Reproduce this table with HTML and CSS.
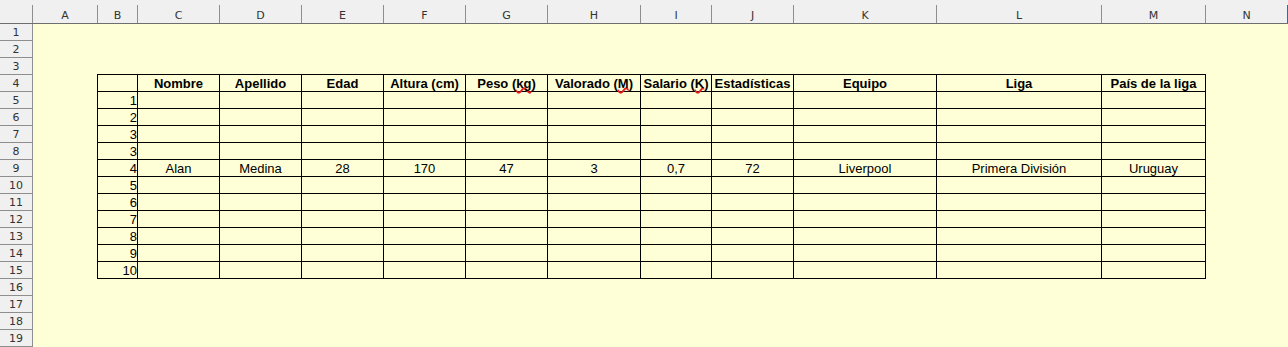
FILE: index.html
```html
<!DOCTYPE html>
<html lang="es">
<head>
<meta charset="utf-8">
<title>Jugadores</title>
<link rel="stylesheet" href="styles.css">
</head>
<body>
<div class="sheet">
  <div class="corner"><span></span></div>
  <div class="colhead"><span>A</span></div>
  <div class="colhead"><span>B</span></div>
  <div class="colhead"><span>C</span></div>
  <div class="colhead"><span>D</span></div>
  <div class="colhead"><span>E</span></div>
  <div class="colhead"><span>F</span></div>
  <div class="colhead"><span>G</span></div>
  <div class="colhead"><span>H</span></div>
  <div class="colhead"><span>I</span></div>
  <div class="colhead"><span>J</span></div>
  <div class="colhead"><span>K</span></div>
  <div class="colhead"><span>L</span></div>
  <div class="colhead"><span>M</span></div>
  <div class="colhead colhead-last"><span>N</span></div>

  <div class="rowhead">1</div>
  <div class="rowhead">2</div>
  <div class="rowhead">3</div>
  <div class="rowhead">4</div>
  <div class="rowhead">5</div>
  <div class="rowhead">6</div>
  <div class="rowhead">7</div>
  <div class="rowhead">8</div>
  <div class="rowhead">9</div>
  <div class="rowhead">10</div>
  <div class="rowhead">11</div>
  <div class="rowhead">12</div>
  <div class="rowhead">13</div>
  <div class="rowhead">14</div>
  <div class="rowhead">15</div>
  <div class="rowhead">16</div>
  <div class="rowhead">17</div>
  <div class="rowhead">18</div>
  <div class="rowhead">19</div>

  <div class="players">
    <div class="th"></div>
    <div class="th">Nombre</div>
    <div class="th">Apellido</div>
    <div class="th">Edad</div>
    <div class="th">Altura (cm)</div>
    <div class="th">Peso (<span class="typo">kg</span>)</div>
    <div class="th">Valorado (<span class="typo">M</span>)</div>
    <div class="th">Salario (<span class="typo">K</span>)</div>
    <div class="th">Estadísticas</div>
    <div class="th">Equipo</div>
    <div class="th">Liga</div>
    <div class="th">País de la liga</div>

    <div class="num">1</div><div></div><div></div><div></div><div></div><div></div><div></div><div></div><div></div><div></div><div></div><div></div>
    <div class="num">2</div><div></div><div></div><div></div><div></div><div></div><div></div><div></div><div></div><div></div><div></div><div></div>
    <div class="num">3</div><div></div><div></div><div></div><div></div><div></div><div></div><div></div><div></div><div></div><div></div><div></div>
    <div class="num">3</div><div></div><div></div><div></div><div></div><div></div><div></div><div></div><div></div><div></div><div></div><div></div>
    <div class="num">4</div><div>Alan</div><div>Medina</div><div>28</div><div>170</div><div>47</div><div>3</div><div>0,7</div><div>72</div><div>Liverpool</div><div>Primera División</div><div>Uruguay</div>
    <div class="num">5</div><div></div><div></div><div></div><div></div><div></div><div></div><div></div><div></div><div></div><div></div><div></div>
    <div class="num">6</div><div></div><div></div><div></div><div></div><div></div><div></div><div></div><div></div><div></div><div></div><div></div>
    <div class="num">7</div><div></div><div></div><div></div><div></div><div></div><div></div><div></div><div></div><div></div><div></div><div></div>
    <div class="num">8</div><div></div><div></div><div></div><div></div><div></div><div></div><div></div><div></div><div></div><div></div><div></div>
    <div class="num">9</div><div></div><div></div><div></div><div></div><div></div><div></div><div></div><div></div><div></div><div></div><div></div>
    <div class="num">10</div><div></div><div></div><div></div><div></div><div></div><div></div><div></div><div></div><div></div><div></div><div></div>
  </div>
</div>
</body>
</html>
```

FILE: styles.css
```css
/* Column widths B..M, shared by the sheet and the players block */
:root {
  --cols-b-m: 40px 82px 82px 82px 82px 82px 93px 71px 82px 143px 165px 104px;
  --hdr-bg: #f0f0f0;
  --hdr-line: #8e8e8e;
  --hdr-text: #333333;
}

* { box-sizing: border-box; }

html, body {
  margin: 0;
  padding: 0;
  background: #ffffd7;
}

body {
  width: 1288px;
  height: 347px;
  overflow: hidden;
  font-family: "Liberation Sans", Arial, sans-serif;
}

/* Whole sheet: row header + columns A..N, column header + rows 1..19 */
.sheet {
  display: grid;
  grid-template-columns: 33px 65px var(--cols-b-m) 82px;
  grid-template-rows: 24px repeat(19, 17px);
}

/* Column header */
.corner,
.colhead {
  background: var(--hdr-bg);
  border-bottom: 1px solid #6e6e6e;
  padding-top: 5px;
  font-family: "DejaVu Sans", sans-serif;
  font-size: 11px;
  color: var(--hdr-text);
}

.corner span,
.colhead span {
  display: block;
  height: 100%;
  border-right: 1px solid var(--hdr-line);
  text-align: center;
  line-height: 13px;
  padding-top: 4px;
}

.colhead-last span {
  border-right-color: #2a6ab8;
}

/* Row header */
.rowhead {
  grid-column: 1;
  background: var(--hdr-bg);
  border-right: 1px solid var(--hdr-line);
  border-bottom: 1px solid var(--hdr-line);
  text-align: center;
  font-family: "DejaVu Sans", sans-serif;
  font-size: 11px;
  color: var(--hdr-text);
  line-height: 14px;
  padding-top: 2px;
}

/* Bordered block of player data, columns B..M, rows 4..15 */
.players {
  grid-column: 3 / 15;
  grid-row: 5 / 17;
  margin: -1px 0 0 -1px;
  display: grid;
  grid-template-columns: var(--cols-b-m);
  grid-template-rows: repeat(12, 17px);
  border-left: 1px solid #000;
  border-top: 1px solid #000;
}

.players > div {
  border-right: 1px solid #000;
  border-bottom: 1px solid #000;
  font-size: 13px;
  line-height: 15px;
  padding-top: 1px;
  text-align: center;
  color: #000;
  white-space: nowrap;
}

.players > .th {
  font-weight: bold;
}

.players > .num {
  text-align: right;
  padding-right: 0;
}

/* Spell-check mark */
.typo {
  text-decoration-line: underline;
  text-decoration-style: wavy;
  text-decoration-color: #e81c1c;
  text-decoration-thickness: 1.5px;
  text-underline-offset: -1px;
  text-decoration-skip-ink: none;
}
```
